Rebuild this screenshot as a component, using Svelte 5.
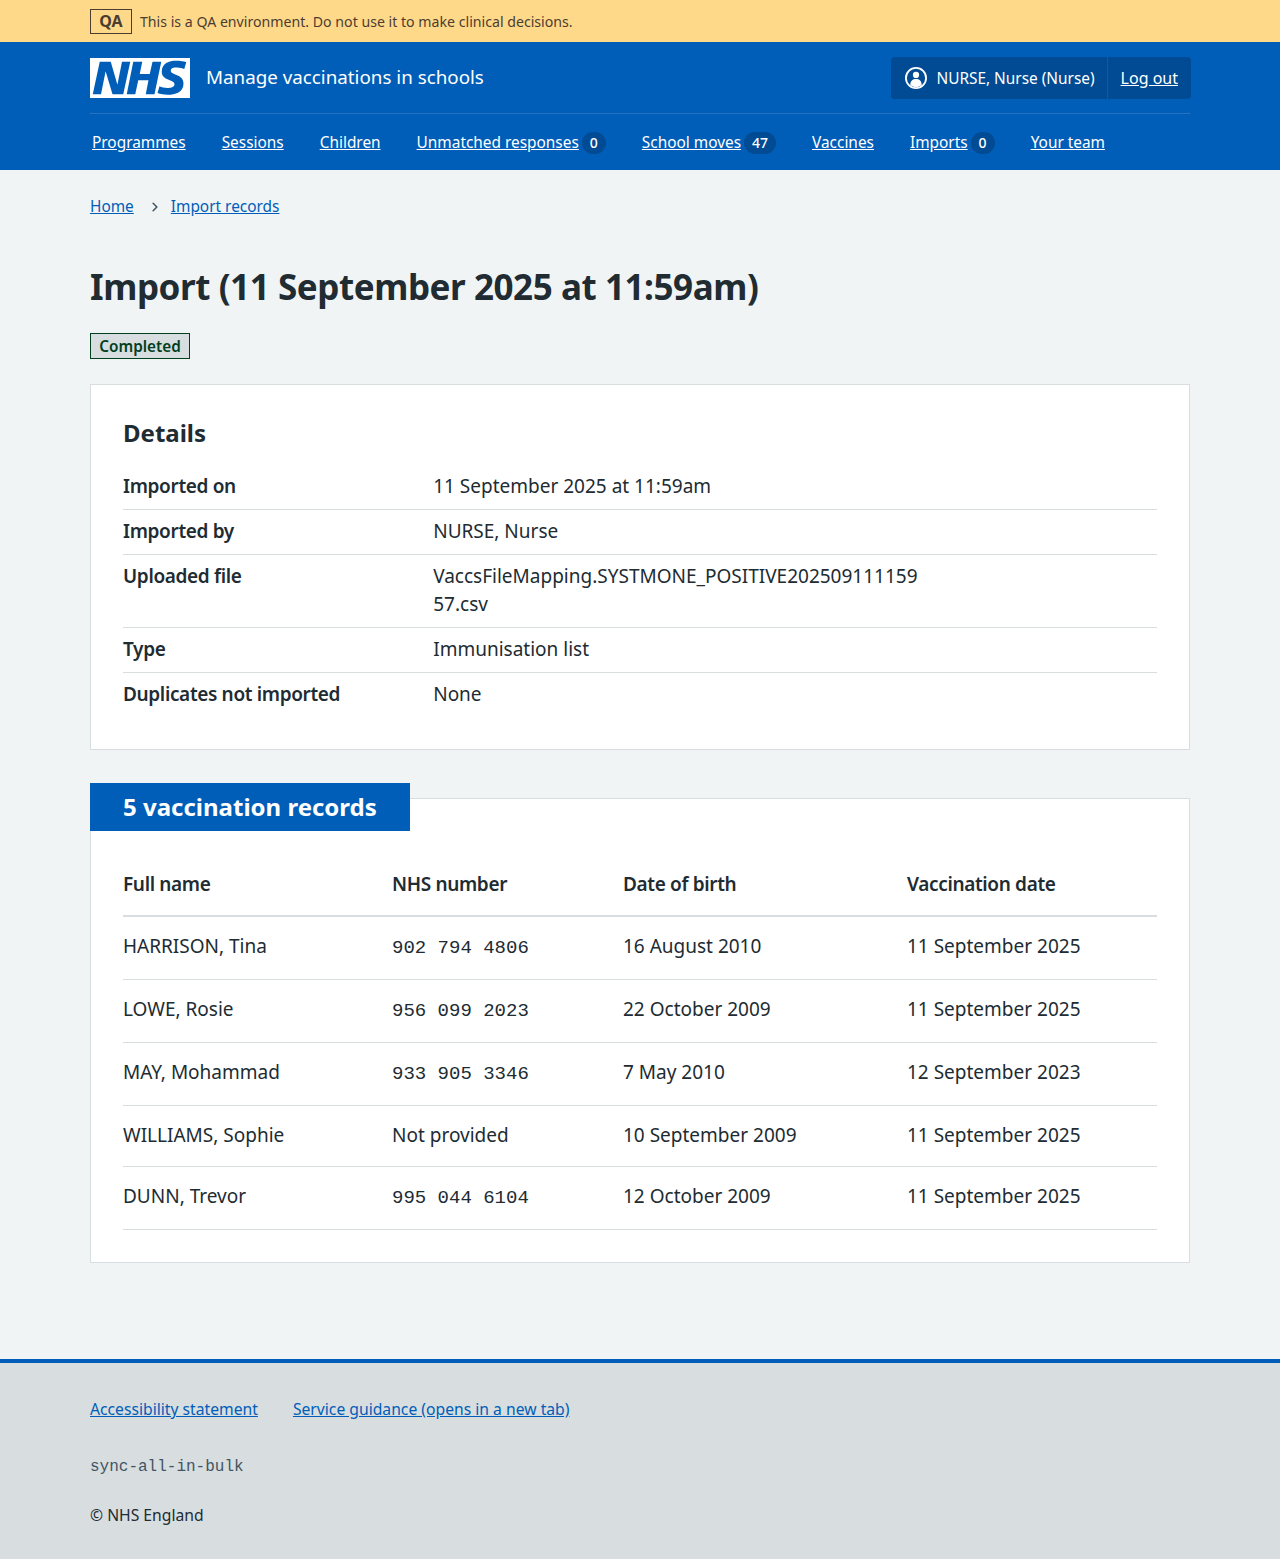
<script>
  const navItems = [
    { label: 'Programmes' },
    { label: 'Sessions' },
    { label: 'Children' },
    { label: 'Unmatched responses', count: 0 },
    { label: 'School moves', count: 47 },
    { label: 'Vaccines' },
    { label: 'Imports', count: 0 },
    { label: 'Your team' }
  ]

  const details = [
    { key: 'Imported on', value: '11 September 2025 at 11:59am' },
    { key: 'Imported by', value: 'NURSE, Nurse' },
    { key: 'Uploaded file', value: 'VaccsFileMapping.SYSTMONE_POSITIVE20250911115957.csv' },
    { key: 'Type', value: 'Immunisation list' },
    { key: 'Duplicates not imported', value: 'None' }
  ]

  const records = [
    { name: 'HARRISON, Tina', nhs: '902 794 4806', dob: '16 August 2010', date: '11 September 2025' },
    { name: 'LOWE, Rosie', nhs: '956 099 2023', dob: '22 October 2009', date: '11 September 2025' },
    { name: 'MAY, Mohammad', nhs: '933 905 3346', dob: '7 May 2010', date: '12 September 2023' },
    { name: 'WILLIAMS, Sophie', nhs: null, dob: '10 September 2009', date: '11 September 2025' },
    { name: 'DUNN, Trevor', nhs: '995 044 6104', dob: '12 October 2009', date: '11 September 2025' }
  ]
</script>

<div class="env">
  <div class="width env-inner">
    <strong class="env-tag">QA</strong>
    <span class="env-text">This is a QA environment. Do not use it to make clinical decisions.</span>
  </div>
</div>

<header class="header">
  <div class="width">
    <div class="header-top">
      <a class="brand" href="#home">
        <svg class="logo" viewBox="0 0 40 16" width="100" height="40" aria-label="NHS">
          <path fill="#fff" d="M0 0h40v16H0z" />
          <path fill="#005eb8" d="M3.9 1.5h4.4l2.6 9h.1l1.8-9h3.3l-2.8 13H9l-2.7-9h-.1l-1.8 9H1.1M17.3 1.5h3.6l-1 4.9h4L25 1.5h3.5l-2.7 13h-3.5l1.1-5.6h-4.1l-1.2 5.6h-3.4M37.7 4.4c-.7-.3-1.6-.6-2.9-.6-1.4 0-2.5.2-2.5 1.3 0 1.8 5.1 1.2 5.1 5.1 0 3.6-3.3 4.5-6.4 4.5-1.3 0-2.9-.3-4-.7l.8-2.7c.7.4 2.1.7 3.2.7s2.8-.2 2.8-1.5c0-2.1-5.1-1.3-5.1-5 0-3.4 2.9-4.4 5.8-4.4 1.6 0 3.1.2 4 .6" />
        </svg>
        <span class="service">Manage vaccinations in schools</span>
      </a>
      <div class="account">
        <div class="account-user">
          <svg viewBox="0 0 24 24" width="22" height="22">
            <circle cx="12" cy="12" r="11" fill="none" stroke="#fff" stroke-width="2" />
            <circle cx="12" cy="8.6" r="3.4" fill="#fff" />
            <path fill="#fff" d="M5.8 19.4c0-4.4 2.6-6.4 6.2-6.4s6.2 2 6.2 6.4c-1.6 1.5-3.8 2.6-6.2 2.6s-4.6-1.1-6.2-2.6z" />
          </svg>
          <span class="account-name">NURSE, Nurse (Nurse)</span>
        </div>
        <a class="account-link" href="#logout">Log out</a>
      </div>
    </div>
    <nav class="nav">
      {#each navItems as item}
        <span class="nav-item">
          <a href="#nav">{item.label}</a>
          {#if item.count !== undefined}
            <span class="count">{item.count}</span>
          {/if}
        </span>
      {/each}
    </nav>
  </div>
</header>

<main class="width main">
  <div class="breadcrumb">
    <a href="#home">Home</a>
    <svg viewBox="0 0 24 24" width="18" height="18">
      <path fill="#425563" d="M15.5 12a1 1 0 0 1-.29.71l-5 5a1 1 0 0 1-1.42-1.42l4.3-4.29-4.3-4.29a1 1 0 0 1 1.42-1.42l5 5a1 1 0 0 1 .29.71z" />
    </svg>
    <a href="#import">Import records</a>
  </div>

  <h1>Import (11 September 2025 at 11:59am)</h1>
  <strong class="tag">Completed</strong>

  <section class="card">
    <h2>Details</h2>
    <dl class="summary">
      {#each details as row}
        <div class="summary-row">
          <dt>{row.key}</dt>
          <dd>{row.value}</dd>
        </div>
      {/each}
    </dl>
  </section>

  <section class="card card-feature">
    <h2 class="feature-heading">5 vaccination records</h2>
    <table>
      <thead>
        <tr>
          <th class="col-name">Full name</th>
          <th class="col-nhs">NHS number</th>
          <th class="col-dob">Date of birth</th>
          <th>Vaccination date</th>
        </tr>
      </thead>
      <tbody>
        {#each records as record}
          <tr>
            <td>{record.name}</td>
            <td>
              {#if record.nhs}
                <span class="mono">{record.nhs}</span>
              {:else}
                Not provided
              {/if}
            </td>
            <td>{record.dob}</td>
            <td>{record.date}</td>
          </tr>
        {/each}
      </tbody>
    </table>
  </section>
</main>

<footer class="footer">
  <div class="width">
    <div class="footer-links">
      <a href="#a11y">Accessibility statement</a>
      <a href="#guidance">Service guidance (opens in a new tab)</a>
    </div>
    <p class="version">sync-all-in-bulk</p>
    <p class="copyright">© NHS England</p>
  </div>
</footer>

<style>
  :global(body) {
    background: #f0f4f5;
    color: #212b32;
    font-family: "Noto Sans", Arial, sans-serif;
    font-size: 19px;
    line-height: 28px;
  }

  a {
    color: #005eb8;
  }

  .width {
    width: 1100px;
    margin: 0 auto;
  }

  .env {
    background: #ffd98a;
    color: #4c3d30;
    font-size: 14.15px;
    height: 42px;
  }

  .env-inner {
    display: flex;
    align-items: center;
    gap: 8px;
    height: 42px;
  }

  .env-tag {
    box-sizing: border-box;
    width: 42px;
    height: 25px;
    border: 1px solid #4c3d30;
    font-size: 16px;
    line-height: 23px;
    text-align: center;
  }

  .env-text {
    padding-top: 2px;
  }

  .header {
    background: #005eb8;
    color: #fff;
    height: 128px;
  }

  .header a {
    color: #fff;
  }

  .header-top {
    display: flex;
    justify-content: space-between;
    align-items: center;
    height: 71px;
    border-bottom: 1px solid #2673bf;
  }

  .brand {
    display: flex;
    align-items: center;
    gap: 16px;
    margin-top: 1px;
    text-decoration: none;
  }

  .service {
    font-size: 18.8px;
    margin-top: -2px;
  }

  .logo {
    display: block;
  }

  .account {
    display: flex;
    height: 42px;
    margin-top: 1px;
    margin-right: -1px;
    background: #004b93;
    border-radius: 4px;
    font-size: 16px;
  }

  .account-user {
    display: flex;
    align-items: center;
    gap: 9px;
    padding: 0 12px 0 14px;
    border-right: 1px solid #005eb8;
    font-size: 15.4px;
    line-height: 24px;
  }

  .account-name {
    padding-top: 1px;
  }

  .account-link {
    display: flex;
    align-items: center;
    padding: 0 13px;
  }

  .nav {
    display: flex;
    gap: 36px;
    padding: 16px 2px 0;
    font-size: 15.4px;
    line-height: 26px;
  }

  .nav-item {
    display: flex;
    align-items: center;
    gap: 3px;
  }

  .count {
    box-sizing: border-box;
    min-width: 24px;
    height: 22px;
    padding: 0 8px;
    background: #004b93;
    border-radius: 11px;
    font-size: 14px;
    font-weight: 500;
    line-height: 22px;
    text-align: center;
  }

  .main {
    padding-bottom: 96px;
  }

  .breadcrumb {
    display: flex;
    align-items: center;
    padding-top: 25px;
    font-size: 15.4px;
    line-height: 24px;
  }

  .breadcrumb svg {
    margin: 0 7px 0 12px;
  }

  h1 {
    margin: 47px 0 25px;
    font-size: 35px;
    letter-spacing: -0.43px;
    line-height: 42px;
    font-weight: 700;
  }

  .tag {
    display: block;
    box-sizing: border-box;
    width: 100px;
    height: 26px;
    background: #d8dde0;
    border: 1px solid #00401e;
    color: #00401e;
    font-size: 15.3px;
    font-weight: 600;
    line-height: 24px;
    text-align: center;
  }

  .card {
    background: #fff;
    border: 1px solid #d8dde0;
    margin-top: 25px;
    padding: 32px;
  }

  h2 {
    margin: 0 0 16px;
    font-size: 24px;
    line-height: 32px;
    font-weight: 700;
  }

  .summary {
    margin: 0;
  }

  .summary-row {
    display: flex;
    border-bottom: 1px solid #d8dde0;
    padding: 7px 0 9px;
  }

  .summary-row:last-child {
    border-bottom: 0;
  }

  dt {
    width: 30%;
    font-weight: 600;
    letter-spacing: -0.35px;
  }

  dd {
    box-sizing: border-box;
    width: 50%;
    margin: 0;
    padding-right: 24px;
    overflow-wrap: anywhere;
  }

  .card-feature {
    position: relative;
    margin-top: 48px;
  }

  .feature-heading {
    position: absolute;
    top: -16px;
    left: -1px;
    margin: 0;
    padding: 8px 33px;
    background: #005eb8;
    color: #fff;
  }

  table {
    width: 100%;
    border-collapse: collapse;
    table-layout: fixed;
  }

  .col-name {
    width: 269px;
  }

  .col-nhs {
    width: 231px;
  }

  .col-dob {
    width: 284px;
  }

  th,
  td {
    padding: 15px 0 17px;
    text-align: left;
    vertical-align: top;
    border-bottom: 1px solid #d8dde0;
  }

  th {
    padding: 39px 0 17px;
    border-bottom: 2px solid #d8dde0;
    font-weight: 600;
    letter-spacing: -0.35px;
  }

  .mono {
    font-family: "Liberation Mono", monospace;
  }

  .footer {
    background: #d8dde0;
    border-top: 4px solid #005eb8;
    height: 196px;
    font-size: 15.7px;
    line-height: 24px;
  }

  .footer-links {
    display: flex;
    gap: 35px;
    padding-top: 34px;
  }

  .version {
    margin: 34px 0 0;
    color: #425563;
    font-size: 16px;
    font-family: "Liberation Mono", monospace;
  }

  .copyright {
    margin: 24px 0 0;
  }
</style>
